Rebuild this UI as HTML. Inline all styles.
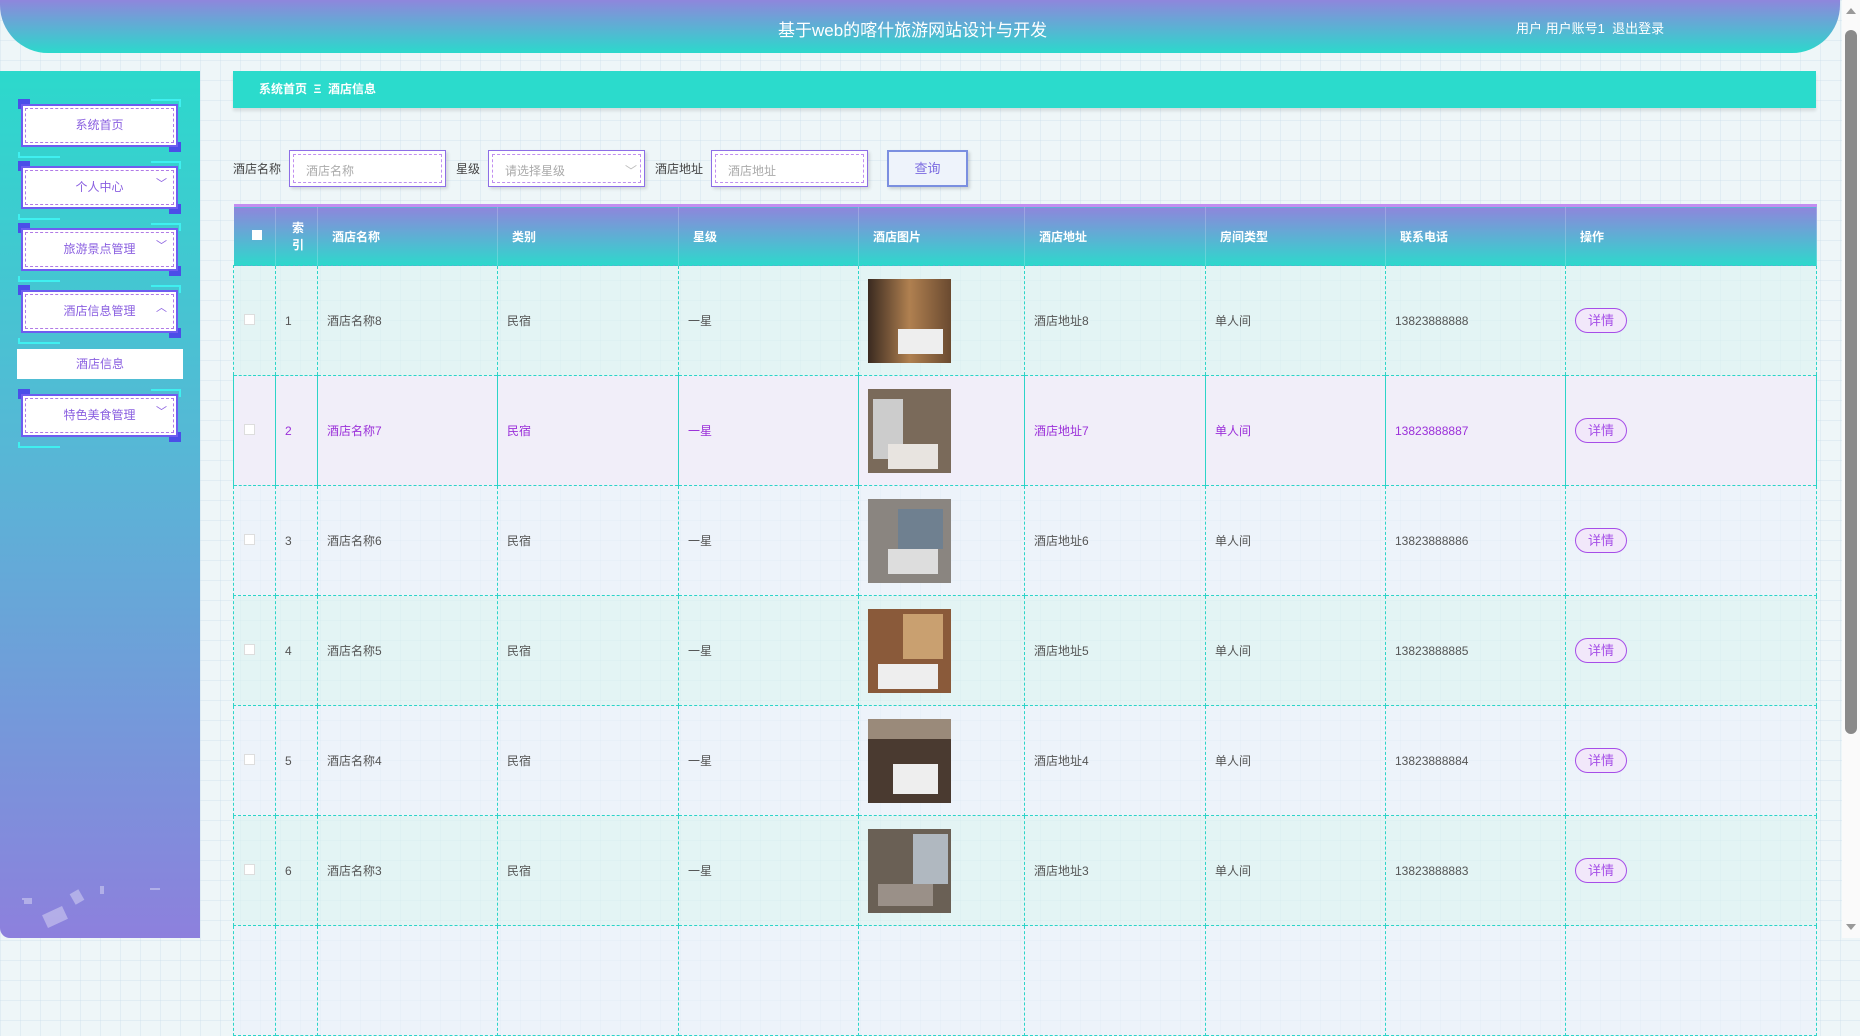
<!DOCTYPE html>
<html><head><meta charset="utf-8"><style>
*{box-sizing:border-box;margin:0;padding:0}
body{width:1860px;height:938px;overflow:hidden;font-family:"Liberation Sans","Noto Sans CJK SC",sans-serif;font-size:13px;color:#555;
background-color:#eef6f8;background-image:linear-gradient(rgba(200,220,235,.35) 1px,transparent 1px),linear-gradient(90deg,rgba(200,220,235,.35) 1px,transparent 1px);background-size:20px 20px;position:relative}
.hdr{position:absolute;left:0;top:0;width:1840px;height:53px;border-radius:0 0 50px 50px/0 0 53px 53px;background:linear-gradient(180deg,#8f86dc,#2bd9cc);border-top-left-radius:0}
.hdr{border-radius:0 0 48px 48px}
.hdr .t{position:absolute;left:778px;top:16px;color:#fff;font-size:17px}
.hdr .u{position:absolute;left:1516px;top:18px;color:#fff;font-size:13px}
.side{position:absolute;left:0;top:71px;width:200px;height:867px;background:linear-gradient(180deg,#2cd9cc,#58b6d6 45%,#8d80dd);border-radius:0 0 0 10px}
.mi{position:absolute;left:18px;width:163px;height:53px}
.mi .b{position:absolute;left:3px;top:5px;width:157px;height:43px;background:#fff;border:2px solid #6e5df0;box-shadow:0 0 0 1px #fff inset}
.mi .b:after{content:"";position:absolute;left:2px;top:2px;right:2px;bottom:2px;border:1px dashed #b07ae6}
.mi .c1{position:absolute;left:0;top:0;width:12px;height:10px;background:#4b4ee8}
.mi .c2{position:absolute;right:0;bottom:0;width:12px;height:10px;background:#4b4ee8}
.mi .c3{position:absolute;right:0;top:0;width:30px;height:8px;border-top:2px solid #3ff0f0;border-right:2px solid #3ff0f0}
.mi .c4{position:absolute;left:0;bottom:-6px;width:42px;height:6px;border-bottom:2px solid #3ff0f0;border-left:2px solid #3ff0f0}
.mi span{position:absolute;left:0;right:0;top:17px;text-align:center;color:#8a5fe0;font-size:12px}
.mi i{position:absolute;right:14px;top:14px;color:#8a5fe0;font-style:normal;font-size:11px}
.sub{position:absolute;left:17px;top:349px;width:166px;height:30px;background:#fff;color:#8a5fe0;text-align:center;line-height:30px;font-size:12px}
.bc{position:absolute;left:233px;top:71px;width:1583px;height:37px;background:#2bdbcc;box-shadow:0 3px 3px rgba(0,0,0,.1);color:#fff;font-size:12px;line-height:37px;padding-left:26px;font-weight:bold}
.lbl{position:absolute;top:160px;font-size:12px;color:#444}
.inp{position:absolute;top:150px;width:157px;height:37px;background:#fff;border:1px solid #8d6ee6;box-shadow:2px 2px 3px rgba(0,0,0,.12)}
.inp:after{content:"";position:absolute;left:3px;top:3px;right:3px;bottom:3px;border:1px dashed #c08ef0}
.inp span{position:absolute;left:16px;top:11px;color:#aaa;font-size:12px}
.btn{position:absolute;left:887px;top:150px;width:81px;height:37px;background:#eef3fb;border:2px solid #7b8fe0;box-shadow:2px 2px 3px rgba(0,0,0,.15);color:#7b6be0;text-align:center;line-height:33px;font-size:13px}
table{position:absolute;left:233px;top:204px;border-collapse:collapse;table-layout:fixed;border-top:3px solid #c38ef0}
th{height:60px;background:linear-gradient(180deg,#8e86dc,#2dd9cc);color:#fff;font-size:12px;text-align:left;padding-left:14px;font-weight:bold;border-right:1px solid rgba(255,255,255,.2)}
td{height:110px;border:1px dashed #2cd4c8;padding-left:9px;font-size:12px;color:#555}
tr.o td{background:rgba(220,244,242,.6)}
tr.e td{background:rgba(236,242,252,.6)}
tr.h td{background:#f1eef9;color:#9b30d9;border-left-style:solid;border-right-style:solid}
.cb{display:inline-block;width:11px;height:11px;background:#fff;border:1px solid #ddd;margin-left:1px}
.img{width:83px;height:84px;display:block}
.det{display:inline-block;width:52px;height:25px;border:1px solid #a64ee8;border-radius:13px;background:#f2e8fa;color:#a64ee8;text-align:center;line-height:23px;font-size:13px}
.sb{position:absolute;left:1842px;top:0;width:18px;height:938px;background:#fafafa}
.sb .th{position:absolute;left:3px;top:30px;width:12px;height:704px;background:#8a8a8a;border-radius:6px}
.sb .a1{position:absolute;left:4px;top:8px;border:5px solid transparent;border-bottom:6px solid #999;border-top:0}
.sb .a2{position:absolute;left:4px;top:924px;border:5px solid transparent;border-top:6px solid #999;border-bottom:0}
</style></head><body>
<div class="hdr"><div class="t">基于web的喀什旅游网站设计与开发</div><div class="u">用户 用户账号1&nbsp; 退出登录</div></div>
<div class="side">
<svg width="200" height="80" style="position:absolute;left:0;bottom:0;opacity:.35"><rect x="44" y="52" width="22" height="14" fill="#fff" transform="rotate(-25 55 59)"/><rect x="72" y="33" width="10" height="12" fill="#fff" transform="rotate(-30 77 39)"/><rect x="24" y="40" width="8" height="6" fill="#fff"/><rect x="100" y="28" width="4" height="8" fill="#fff"/><rect x="150" y="30" width="10" height="2" fill="#fff"/><rect x="22" y="40" width="10" height="2" fill="#fff"/></svg>
</div>
<div class="mi" style="top:99px"><div class="c1"></div><div class="c2"></div><div class="c3"></div><div class="c4"></div><div class="b"></div><span>系统首页</span></div>
<div class="mi" style="top:161px"><div class="c1"></div><div class="c2"></div><div class="c3"></div><div class="c4"></div><div class="b"></div><span>个人中心</span><i>﹀</i></div>
<div class="mi" style="top:223px"><div class="c1"></div><div class="c2"></div><div class="c3"></div><div class="c4"></div><div class="b"></div><span>旅游景点管理</span><i>﹀</i></div>
<div class="mi" style="top:285px"><div class="c1"></div><div class="c2"></div><div class="c3"></div><div class="c4"></div><div class="b"></div><span>酒店信息管理</span><i>︿</i></div>
<div class="sub">酒店信息</div>
<div class="mi" style="top:389px"><div class="c1"></div><div class="c2"></div><div class="c3"></div><div class="c4"></div><div class="b"></div><span>特色美食管理</span><i>﹀</i></div>
<div class="bc">系统首页 &nbsp;Ξ&nbsp; 酒店信息</div>
<div class="lbl" style="left:233px">酒店名称</div>
<div class="inp" style="left:289px"><span>酒店名称</span></div>
<div class="lbl" style="left:456px">星级</div>
<div class="inp" style="left:488px"><span>请选择星级</span><span style="left:136px;color:#bbb">﹀</span></div>
<div class="lbl" style="left:655px">酒店地址</div>
<div class="inp" style="left:711px"><span>酒店地址</span></div>
<div class="btn">查询</div>
<table>
<colgroup><col style="width:42px"><col style="width:42px"><col style="width:180px"><col style="width:181px"><col style="width:180px"><col style="width:166px"><col style="width:181px"><col style="width:180px"><col style="width:180px"><col style="width:251px"></colgroup>
<tr><th style="padding-left:17px"><span class="cb" style="border:none;width:10px;height:10px"></span></th><th style="padding-left:16px">索<br>引</th><th>酒店名称</th><th>类别</th><th>星级</th><th>酒店图片</th><th>酒店地址</th><th>房间类型</th><th>联系电话</th><th>操作</th></tr>
<tr class="o"><td><span class="cb"></span></td><td>1</td><td>酒店名称8</td><td>民宿</td><td>一星</td><td><svg class="img"><defs><linearGradient id="g1" x1="0" x2="1"><stop offset="0" stop-color="#3a2a20"/><stop offset=".5" stop-color="#b08050"/><stop offset="1" stop-color="#6a4a30"/></linearGradient></defs><rect width="83" height="84" fill="url(#g1)"/><rect x="30" y="50" width="45" height="25" fill="#eee"/></svg></td><td>酒店地址8</td><td>单人间</td><td>13823888888</td><td><span class="det">详情</span></td></tr>
<tr class="h"><td><span class="cb"></span></td><td>2</td><td>酒店名称7</td><td>民宿</td><td>一星</td><td><svg class="img"><rect width="83" height="84" fill="#7a6a5a"/><rect x="5" y="10" width="30" height="60" fill="#ccc"/><rect x="20" y="55" width="50" height="25" fill="#e8e4e0"/></svg></td><td>酒店地址7</td><td>单人间</td><td>13823888887</td><td><span class="det">详情</span></td></tr>
<tr class="e"><td><span class="cb"></span></td><td>3</td><td>酒店名称6</td><td>民宿</td><td>一星</td><td><svg class="img"><rect width="83" height="84" fill="#8a8580"/><rect x="30" y="10" width="45" height="40" fill="#6f8090"/><rect x="20" y="50" width="50" height="25" fill="#ddd"/></svg></td><td>酒店地址6</td><td>单人间</td><td>13823888886</td><td><span class="det">详情</span></td></tr>
<tr class="o"><td><span class="cb"></span></td><td>4</td><td>酒店名称5</td><td>民宿</td><td>一星</td><td><svg class="img"><rect width="83" height="84" fill="#8a5a3a"/><rect x="35" y="5" width="40" height="45" fill="#c9a070"/><rect x="10" y="55" width="60" height="25" fill="#eee"/></svg></td><td>酒店地址5</td><td>单人间</td><td>13823888885</td><td><span class="det">详情</span></td></tr>
<tr class="e"><td><span class="cb"></span></td><td>5</td><td>酒店名称4</td><td>民宿</td><td>一星</td><td><svg class="img"><rect width="83" height="84" fill="#4a3a30"/><rect x="0" y="0" width="83" height="20" fill="#9a8a7a"/><rect x="25" y="45" width="45" height="30" fill="#eee"/></svg></td><td>酒店地址4</td><td>单人间</td><td>13823888884</td><td><span class="det">详情</span></td></tr>
<tr class="o"><td><span class="cb"></span></td><td>6</td><td>酒店名称3</td><td>民宿</td><td>一星</td><td><svg class="img"><rect width="83" height="84" fill="#6a6055"/><rect x="45" y="5" width="35" height="50" fill="#b0b8c0"/><rect x="10" y="55" width="55" height="22" fill="#9a9088"/></svg></td><td>酒店地址3</td><td>单人间</td><td>13823888883</td><td><span class="det">详情</span></td></tr>
<tr class="e"><td></td><td></td><td></td><td></td><td></td><td></td><td></td><td></td><td></td><td></td></tr>
</table>
<div class="sb"><div class="a1"></div><div class="th"></div><div class="a2"></div></div>
</body></html>
